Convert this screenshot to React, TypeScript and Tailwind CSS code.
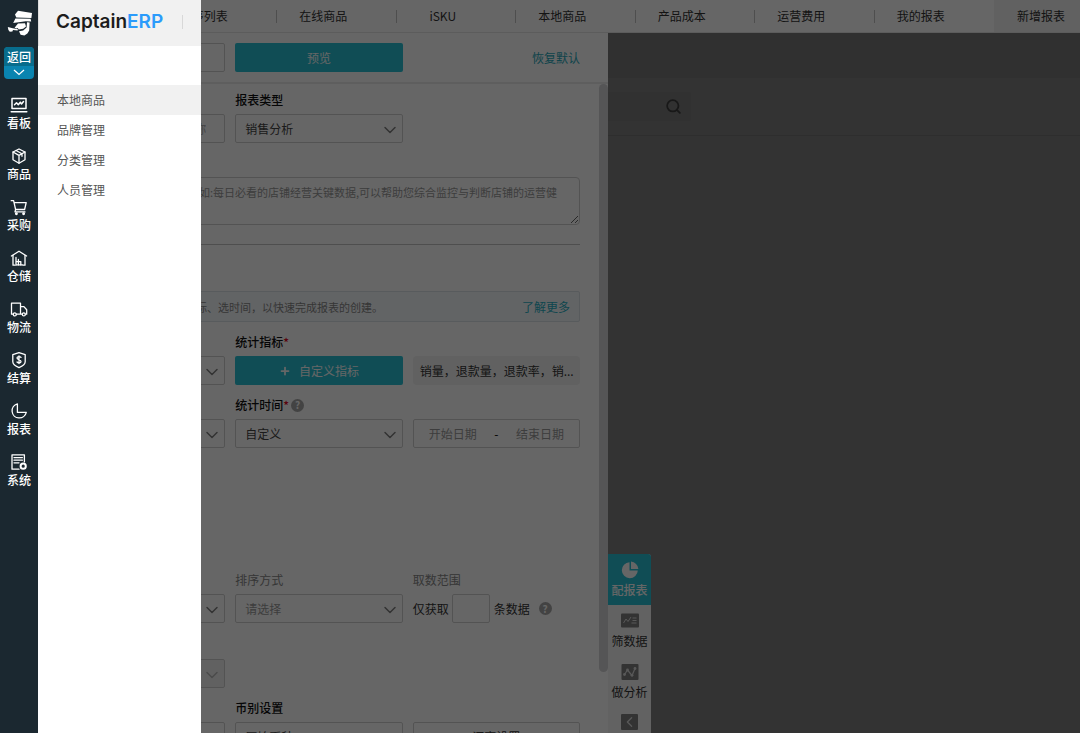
import React from "react";
import { ChevronDown, ChevronLeft, Plus, Search } from "lucide-react";

const navItems = [
  { label: "看板", icon: "board" },
  { label: "商品", icon: "box" },
  { label: "采购", icon: "cart" },
  { label: "仓储", icon: "house" },
  { label: "物流", icon: "truck" },
  { label: "结算", icon: "shield" },
  { label: "报表", icon: "pie" },
  { label: "系统", icon: "system" },
];

const tabs = ["程序列表", "在线商品", "iSKU", "本地商品", "产品成本", "运营费用", "我的报表"];

const menu = ["本地商品", "品牌管理", "分类管理", "人员管理"];

function NavIcon({ name }: { name: string }) {
  return (
    <svg
      viewBox="0 0 18 18"
      className="h-[18px] w-[18px]"
      fill="none"
      stroke="currentColor"
      strokeWidth="1.3"
      strokeLinejoin="round"
      strokeLinecap="round"
      aria-hidden="true"
    >
      {name === "board" && (
        <>
          <path d="M2 2.500h14v10H2zM1.200 15.700h15.600" strokeWidth="1.500" />
          <path d="M4.500 8.800l2-2 1.800 2 2-2.600 1.200 1.800 2-2.500" strokeWidth="1.500" />
        </>
      )}
      {name === "box" && (
        <>
          <path d="M9 2l6 3v7.800L9 16.200l-6-3.400V5z" />
          <path d="M3 5l6 3.400L15 5M9 8.400v7.800M6 3.500l6 3.200v2.600" />
        </>
      )}
      {name === "cart" && (
        <>
          <path d="M1.200 2.700h2.400l2 8.800h9l1.600-6.900H4.200M5.600 11.500l-.6 2.400h10" />
          <circle cx="6.400" cy="15.800" r=".8" />
          <circle cx="13.600" cy="15.800" r=".8" />
        </>
      )}
      {name === "house" && (
        <>
          <path d="M1.400 7L9 2.200 16.600 7" />
          <path d="M3 6.400v9.800h2M15 6.400v9.800h-2" />
          <path d="M6 8.500v7.700M8.400 10.400v5.800M10.800 12.600v3.600M6 12.600h4.800M6 15.800h6.400" />
        </>
      )}
      {name === "truck" && (
        <>
          <path d="M3.200 14.200H1.500V3.200h9v11H6.400M10.500 6.600h3.400l2.800 3.200v4.400h-1.200M12.200 14.200h-1.700" />
          <circle cx="4.800" cy="14.400" r="1.500" />
          <circle cx="13.800" cy="14.400" r="1.500" />
        </>
      )}
      {name === "shield" && (
        <>
          <path d="M9 1.600l6.200 2v7.200c0 2.400-2.600 4.400-6.200 5.800-3.600-1.400-6.200-3.400-6.200-5.800V3.600z" />
          <path d="M11 6.400c-1-1.200-4-1-4 .7 0 2.100 4 1.200 4 3.300 0 1.800-3 1.900-4 .6M9 4.800v7.800" />
        </>
      )}
      {name === "pie" && <path d="M7.400 1.800a7.200 7.200 0 1 0 8.900 8.600H7.400z" />}
      {name === "system" && (
        <>
          <path d="M9 16.200H2V1.800h12.400v7" />
          <path d="M4 4.600h8.400M4 7.200h8.400M4 9.800h5" />
          <circle cx="13.200" cy="13.200" r="2.600" strokeWidth="2" />
        </>
      )}
    </svg>
  );
}

function Captain() {
  return (
    <svg viewBox="0 0 26 26" className="h-[26px] w-[26px]" fill="white" aria-hidden="true">
      <path d="M8 4.400L11 .8l14 2.300-.6 4.800L9.300 7.400z" />
      <path d="M8.400 8.400l15.200.3.600 2.700-5.400-.2L6.200 13z" />
      <path d="M11 13.600l-3.400 4.200 2 .6 1.200-.4.800 1.400 4.600-.6 2.800-2.400-1-3.200z" />
      <path d="M20 12.200l2.600.2-.4 8.200-1.800 3-3 1.800-3.800-.6-1.600-3.600 4.200-.6 3.400-3z" />
      <path d="M.8 17l5 1.200 5.200 1-.4 1.200-4.600-.4-.6 1.600-2.600.2L1.400 20z" />
    </svg>
  );
}

function Help() {
  return (
    <span className="inline-flex h-[13px] w-[13px] items-center justify-center rounded-full bg-[#a8a8a8] text-[10px] font-bold leading-none text-white">
      ?
    </span>
  );
}

function Label({ id, text, required, help, muted }: { id: string; text: string; required?: boolean; help?: boolean; muted?: boolean }) {
  return (
    <div className={muted ? "mb-1 flex h-5 items-center text-[#888]" : "mb-1 flex h-5 items-center font-medium text-[#111]"}>
      <label htmlFor={id}>
        {text}
        {required && <span className="text-[#e00020]">*</span>}
      </label>
      {help && (
        <span className="ml-[2px] flex">
          <Help />
        </span>
      )}
    </div>
  );
}

function Select({ id, value, name, muted, disabled }: { id: string; value?: string; name?: string; muted?: boolean; disabled?: boolean }) {
  return (
    <div className="relative">
      <select
        id={id}
        aria-label={name}
        disabled={disabled}
        className={
          "block h-[29px] w-full appearance-none rounded-[2px] border border-[#d0d0d0] pl-[9px] pr-7 " +
          (disabled ? "bg-[#f3f3f3] " : "bg-white ") +
          (muted ? "text-[#999]" : "text-[#444]")
        }
      >
        <option>{value}</option>
      </select>
      <ChevronDown
        strokeWidth={1.8}
        className={"pointer-events-none absolute right-[3px] top-[6px] h-5 w-5 " + (disabled ? "text-[#bbb]" : "text-[#808080]")}
      />
    </div>
  );
}

function SidePanel() {
  return (
    <section className="flex w-[570px] shrink-0 flex-col bg-white">
      <div className="grid h-[51px] shrink-0 grid-cols-3 items-center gap-[10px] border-b-2 border-[#ececec] pl-5 pr-7">
        <button className="h-[29px] rounded-[2px] border border-[#d0d0d0]" aria-label="操作" />
        <button className="h-[29px] rounded-[2px] bg-[#28c1d5] text-white">预览</button>
        <a href="#reset" className="justify-self-end text-[#28a9bb]">恢复默认</a>
      </div>
      <div className="flex min-h-0 flex-1 overflow-hidden">
        <form className="flex-1 pl-5 pr-[19px] pt-[6px]">
          <div className="grid grid-cols-3 gap-[10px]">
            <div className="pt-6">
              <input aria-label="名称" placeholder="名称" className="block h-[29px] w-full rounded-[2px] border border-[#d0d0d0] pr-[18px] text-right placeholder:text-[#aaa]" />
            </div>
            <div>
              <Label id="type" text="报表类型" />
              <Select id="type" value="销售分析" />
            </div>
          </div>
          <textarea
            aria-label="说明"
            placeholder="如:每日必看的店铺经营关键数据,可以帮助您综合监控与判断店铺的运营健"
            className="mt-[34px] block h-12 w-full rounded-[4px] border border-[#d0d0d0] py-[5px] pl-[140px] pr-1 text-[11px] leading-[18px] placeholder:text-[#999]"
          />
          <hr className="mt-[19px] border-[#c4c4c4]" />
          <div className="mt-[46px] flex h-[31px] items-center justify-between rounded-[2px] border border-[#dde3e8] bg-[#f6f9fc] pl-[137px] pr-[9px]">
            <span className="text-[11px] text-[#888]">标、选时间，以快速完成报表的创建。</span>
            <a href="#more" className="text-[12px] text-[#28b0c4]">了解更多</a>
          </div>
          <div className="mt-[10px] grid grid-cols-3 items-end gap-[10px]">
            <Select id="dimension" name="统计维度" />
            <div>
              <Label id="metric" text="统计指标" required />
              <button id="metric" type="button" className="flex h-[29px] w-full items-center justify-center gap-2 rounded-[2px] bg-[#28c1d5] text-white">
                <Plus className="h-3 w-3" strokeWidth={3.5} />
                自定义指标
              </button>
            </div>
            <div className="h-[29px] whitespace-nowrap rounded-[4px] bg-[#f3f3f3] pl-[7px] leading-[29px] text-[#333]">销量，退款量，退款率，销...</div>
            <Select id="object" name="统计对象" />
            <div>
              <Label id="time" text="统计时间" required help />
              <Select id="time" value="自定义" />
            </div>
            <div className="flex h-[29px] items-center justify-between rounded-[2px] border border-[#d0d0d0] px-[15px]">
              <input aria-label="开始日期" placeholder="开始日期" className="w-12 placeholder:text-[#999]" />
              <span>-</span>
              <input aria-label="结束日期" placeholder="结束日期" className="w-12 placeholder:text-[#999]" />
            </div>
          </div>
          <div className="mt-[122px] grid grid-cols-3 items-end gap-x-[10px]">
            <Select id="sort" name="排序" />
            <div>
              <Label id="order" text="排序方式" muted />
              <Select id="order" value="请选择" muted />
            </div>
            <div>
              <Label id="range" text="取数范围" muted />
              <div className="flex items-center text-[#333]">
                仅获取
                <input id="range" className="ml-[3px] mr-1 h-[29px] w-[38px] rounded-[2px] border border-[#d0d0d0] px-1" />
                条数据
                <span className="ml-[9px] flex">
                  <Help />
                </span>
              </div>
            </div>
          </div>
          <div className="mt-9 grid grid-cols-3 gap-[10px]">
            <Select id="group" name="分组" disabled />
          </div>
          <div className="mt-[10px] grid grid-cols-3 items-end gap-[10px]">
            <Select id="region" name="区域" />
            <div>
              <Label id="currency" text="币别设置" />
              <Select id="currency" value="原始币种" />
            </div>
            <button type="button" className="h-[29px] rounded-[2px] border border-[#d0d0d0] text-[#333]">汇率设置</button>
          </div>
        </form>
        <div className="w-[9px] shrink-0">
          <div className="h-[588px] rounded-full bg-[#d4d4d6]" />
        </div>
      </div>
    </section>
  );
}

function ToolTabs() {
  return (
    <div className="absolute left-0 top-[521px] w-[43px] overflow-hidden rounded-tr-[3px] bg-[#f4f4f4] text-[#333]">
      <button className="flex h-[51px] w-full flex-col items-center bg-[#28c1d5] pt-[7px] font-medium text-white">
        <svg viewBox="0 0 18 18" className="h-[18px] w-[18px]" fill="currentColor" aria-hidden="true">
          <path d="M8.500 1.200v8.300h8.300A8 8 0 1 1 8.500 1.200z" />
          <path d="M10 .6a8 8 0 0 1 7.400 7.400H10z" />
        </svg>
        <span className="whitespace-nowrap leading-[22px]">配报表</span>
      </button>
      <button className="flex h-[51px] w-full flex-col items-center pt-[7px]">
        <svg viewBox="0 0 18 18" className="h-[18px] w-[18px]" fill="none" stroke="#ddd" aria-hidden="true">
          <rect x="0" y="1.500" width="18" height="14" rx="1" fill="#808080" stroke="none" />
          <path d="M2.500 11l2.500-4 2 2.500 3-4.500M11.500 6h4M11.500 8.500h4M10.500 11h5" />
        </svg>
        <span className="whitespace-nowrap leading-[22px]">筛数据</span>
      </button>
      <button className="flex h-[51px] w-full flex-col items-center pt-[7px]">
        <svg viewBox="0 0 18 18" className="h-[18px] w-[18px]" fill="none" stroke="#ddd" strokeWidth="1.200" aria-hidden="true">
          <rect x=".5" y="1" width="17" height="16" rx="1" fill="#808080" stroke="none" />
          <path d="M3.500 11.500l3-4.500 4.500 5.500 3-7" />
          <g fill="#ddd" stroke="none">
            <circle cx="3.500" cy="11.500" r="1.400" />
            <circle cx="6.500" cy="7" r="1.400" />
            <circle cx="11" cy="12.300" r="1.400" />
            <circle cx="14" cy="5.500" r="1.400" />
          </g>
        </svg>
        <span className="whitespace-nowrap leading-[22px]">做分析</span>
      </button>
      <button aria-label="收起" className="flex h-[51px] w-full flex-col items-center pt-[7px]">
        <span className="flex h-4 w-[17px] items-center justify-center rounded-[1px] bg-[#808080] text-[#ddd]">
          <ChevronLeft className="h-5 w-5" strokeWidth={1.8} />
        </span>
      </button>
    </div>
  );
}

export default function App() {
  return (
    <div className="relative flex h-screen overflow-hidden bg-white font-['Noto_Sans_CJK_SC',sans-serif] text-[12px] leading-[18px]">
      <nav className="z-20 flex w-[38px] shrink-0 flex-col items-center bg-[#1b2830] text-white">
        <a href="#home" aria-label="CaptainERP" className="ml-[2px] mt-[10px]">
          <Captain />
        </a>
        <button className="mt-[11px] w-[30px] shrink-0 overflow-hidden rounded-[4px] bg-[#0a84b0] font-medium">
          <span className="block bg-[#086c8c] leading-[19px]">返回</span>
          <svg viewBox="0 0 12 13" className="mx-auto h-[13px] w-3" fill="none" stroke="currentColor" strokeWidth="1.300" aria-hidden="true">
            <path d="M1 4l5 4.500L11 4" />
          </svg>
        </button>
        <div className="mt-[17px] flex flex-col gap-[15px]">
          {navItems.map((n) => (
            <a key={n.label} href="#nav" className="flex h-9 flex-col items-center font-medium">
              <NavIcon name={n.icon} />
              <span className="leading-[18px]">{n.label}</span>
            </a>
          ))}
        </div>
      </nav>
      <aside className="absolute inset-y-0 left-[38px] z-20 w-[163px] bg-white">
        <div className="flex h-[46px] items-center justify-between border-l border-[#ddd] bg-[#f1f1f1] pb-[3px] pl-[17px] pr-[18px]">
          <span className="font-['Inter',sans-serif] text-[19px] font-semibold text-[#1c1c1c]">
            Captain<span className="text-[#2b9bfb]">ERP</span>
          </span>
          <span className="h-[14px] w-px bg-[#d8d8d8]" />
        </div>
        <ul className="mt-[39px] text-[#555]">
          {menu.map((m, i) => (
            <li key={m} className={i === 0 ? "bg-[#f1f1f1]" : ""}>
              <a href="#menu" className="block pl-[19px] leading-[30px]">{m}</a>
            </li>
          ))}
        </ul>
      </aside>
      <main className="flex min-w-0 flex-1 flex-col">
        <header className="flex h-[33px] shrink-0 items-center border-b border-[#e6e6e6] text-[#333]">
          <div className="grid flex-1 grid-cols-8">
            {tabs.map((t) => (
              <a
                key={t}
                href="#tab"
                className="flex h-[13px] items-center justify-center border-r border-[#c4c4c4] pr-[26px] first:col-start-2 last:border-transparent"
              >
                {t}
              </a>
            ))}
          </div>
          <a href="#tab" className="flex h-full w-[86px] items-center bg-[#f2f2f2] pl-[23px]">新增报表</a>
        </header>
        <div className="flex min-h-0 flex-1">
          <SidePanel />
          <section className="relative min-w-0 flex-1 bg-[#7f7f7f]">
            <div className="h-[45px] bg-[#787878]" />
            <div className="flex h-[58px] items-center border-b border-[#747474]">
              <div className="flex h-[29px] w-[83px] items-center justify-end rounded-r-[2px] bg-[#7a7a7a] pr-[9px] text-[#3c3c3c]">
                <Search className="h-[17px] w-[17px]" strokeWidth={2.5} />
              </div>
            </div>
            <ToolTabs />
          </section>
        </div>
      </main>
      <div className="absolute inset-0 z-10 bg-black/60" />
    </div>
  );
}
